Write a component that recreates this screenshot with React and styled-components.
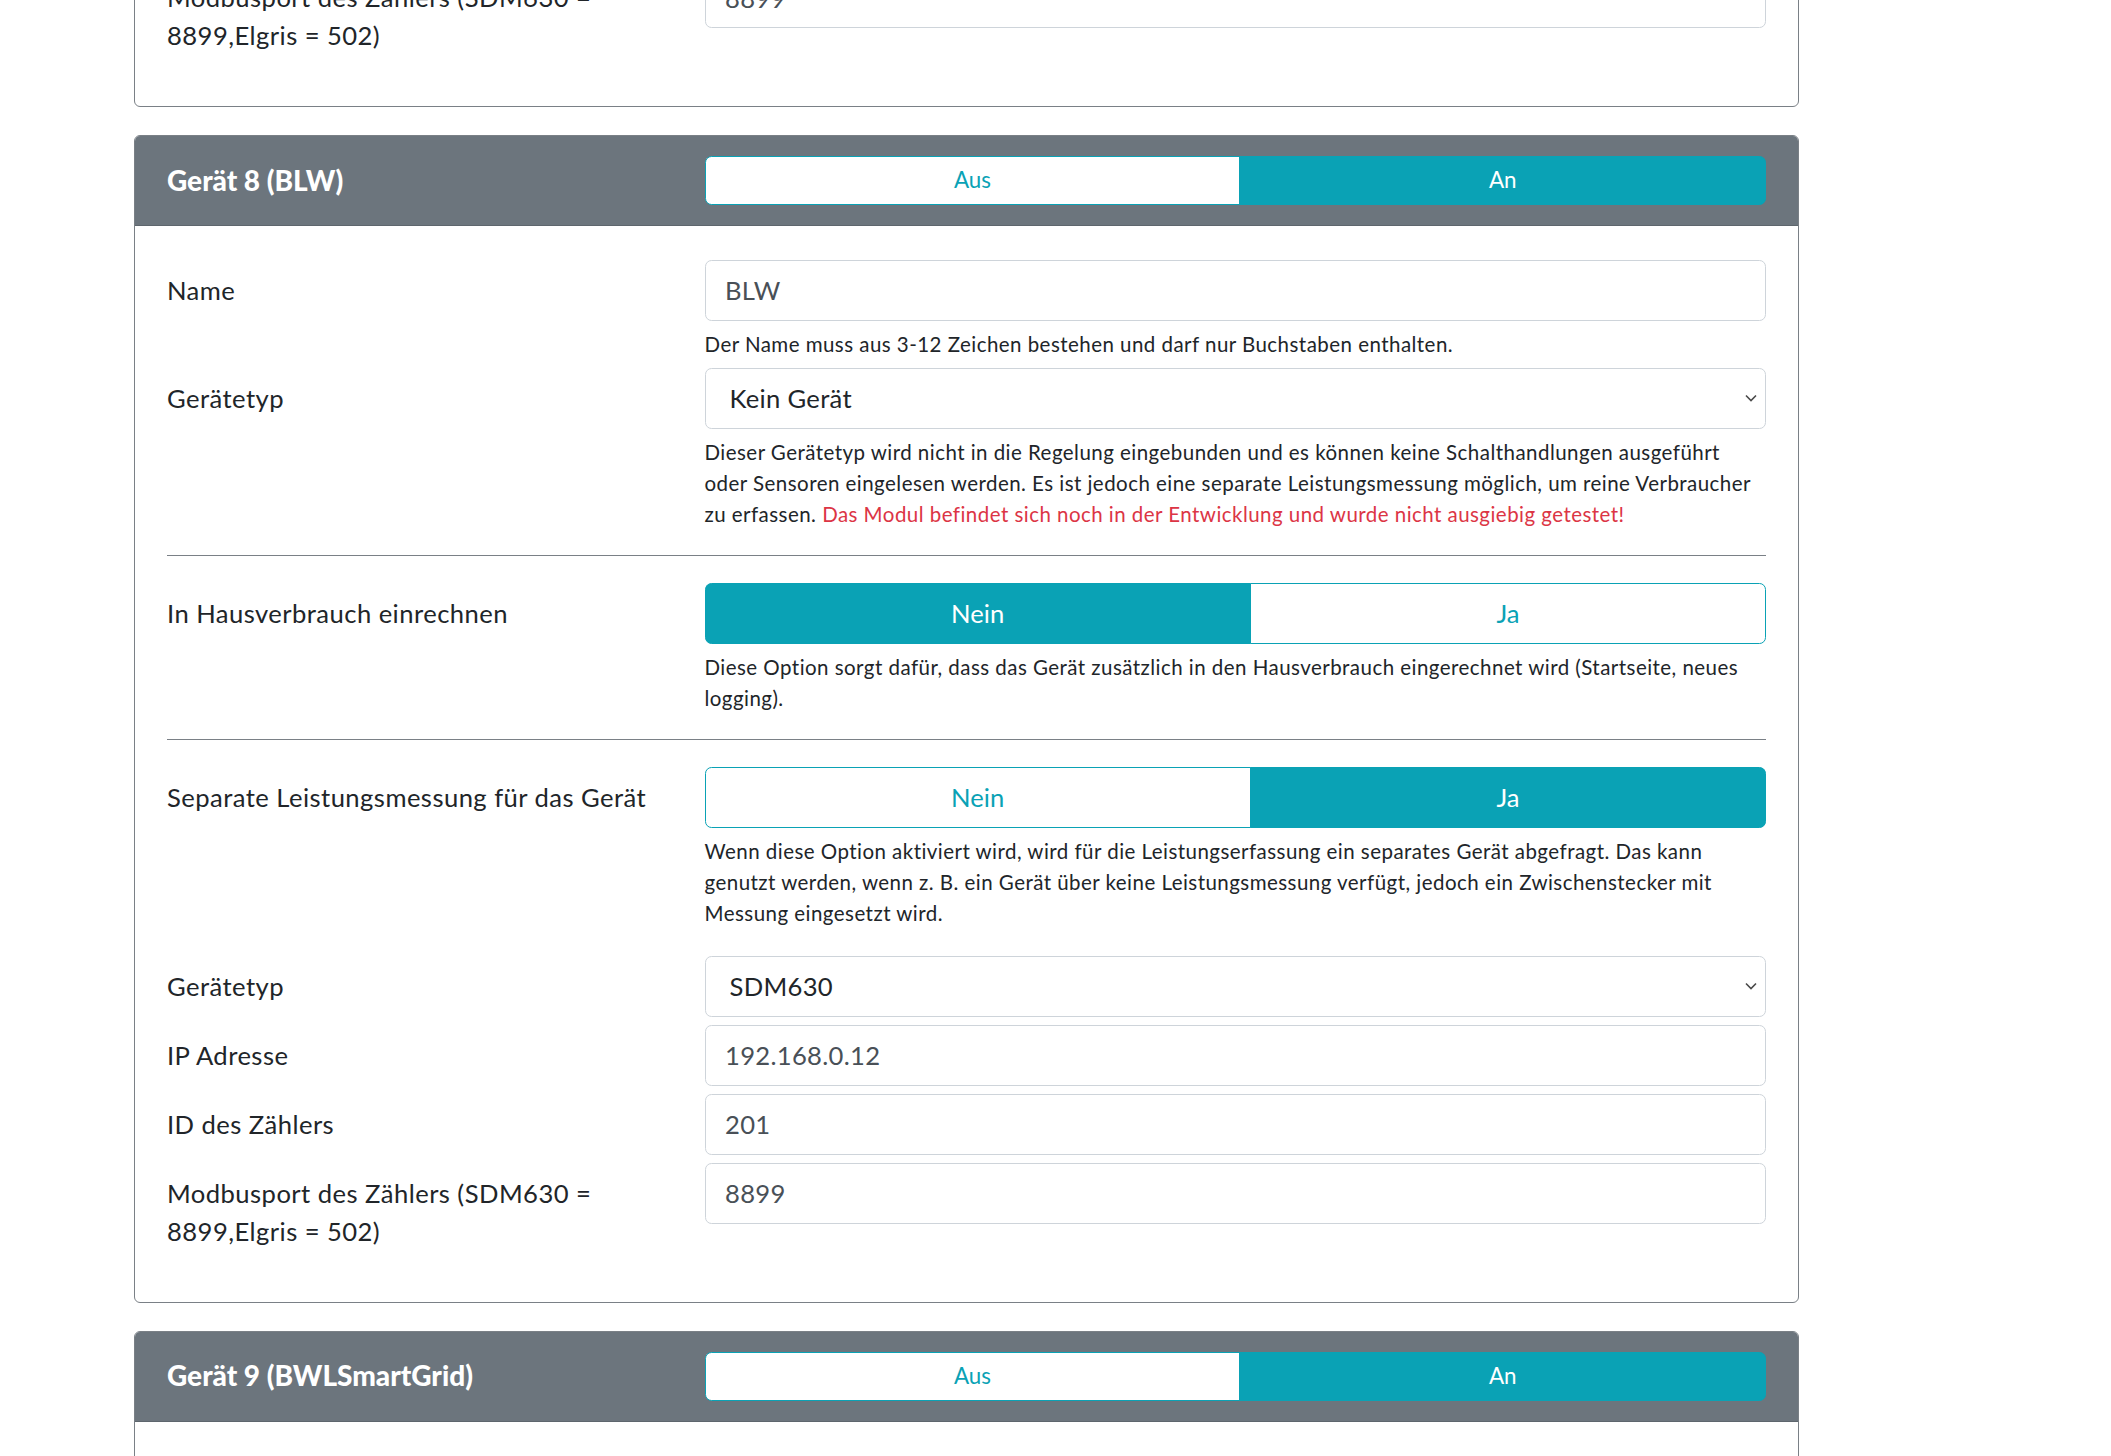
import React from 'react'
import styled, { createGlobalStyle } from 'styled-components';

const teal = '#0aa2b5';
const secondary = '#6c757d';
const line = '#7a8086';

const GlobalStyle = createGlobalStyle`
  html, body {
    margin: 0;
    padding: 0;
    background: #fff;
  }
  body {
    font-family: Lato, "Open Sans", "Noto Sans", sans-serif;
    font-size: 25.6px;
    line-height: 1.5;
    color: #212529;
  }
  * { box-sizing: border-box; }
`;

// the page is scrolled: only the tail of the previous card shows at the top
const Page = styled.div`
  width: 1665px;
  margin: -68px 0 0 134px;
`;

const Card = styled.section`
  border: 1px solid ${line};
  border-radius: 6px;
  margin-bottom: 28px;
  overflow: hidden;
  background: #fff;
`;

const CardHeader = styled.header`
  display: grid;
  grid-template-columns: 522px 1fr;
  column-gap: 15.5px;
  align-items: center;
  background: ${secondary};
  padding: 20px 32px;
  border-bottom: 1px solid rgba(0, 0, 0, 0.125);
`;

const Title = styled.h5`
  margin: 0;
  color: #fff;
  font-size: 28px;
  font-weight: 900;
  line-height: 1.2;
`;

const CardBody = styled.div`
  padding: 34px 32px 32px;
`;

const FormRow = styled.div`
  display: grid;
  grid-template-columns: 522px 1fr;
  column-gap: 15.5px;
  margin-top: ${p => p.$gapTop || 0}px;
  margin-bottom: 8px;
`;

const Label = styled.label`
  padding: 11px 0;
  line-height: 38.4px;
  font-size: 25.6px;
  letter-spacing: 0.45px;
`;

const Field = styled.div`
  min-width: 0;
`;

const Input = styled.input`
  display: block;
  width: 100%;
  height: 61px;
  padding: 0 19.5px;
  font-family: inherit;
  font-size: 25.6px;
  letter-spacing: 0.3px;
  color: #495057;
  background: #fff;
  border: 1px solid #ced4da;
  border-radius: 6.5px;
  outline: none;
`;

const SelectWrap = styled.div`
  position: relative;
`;

const Select = styled.select`
  display: block;
  width: 100%;
  height: 61px;
  padding: 0 40px 0 24px;
  font-family: inherit;
  font-size: 25.6px;
  letter-spacing: 0.3px;
  color: #212529;
  background: #fff;
  border: 1px solid #ced4da;
  border-radius: 6.5px;
  appearance: none;
  outline: none;
`;

const Chevron = styled.svg`
  position: absolute;
  right: 9px;
  top: 50%;
  margin-top: -4px;
  width: 12px;
  height: 8px;
  pointer-events: none;
`;

const Help = styled.small`
  display: block;
  margin-top: 8px;
  font-size: 20.5px;
  line-height: 31px;
  letter-spacing: 0.46px;
  color: #212529;
`;

const Danger = styled.span`
  color: #dc3545;
`;

const Divider = styled.hr`
  border: 0;
  border-top: 1px solid ${line};
  margin: 25px 0 27px;
`;

const Toggle = styled.div`
  display: flex;
  width: 100%;
  height: ${p => (p.$small ? 49 : 61)}px;
`;

const ToggleButton = styled.button`
  flex: 1 1 auto;
  margin: 0;
  padding: 0 12px;
  font-family: inherit;
  font-size: ${p => (p.$small ? 22.4 : 25.6)}px;
  line-height: 1;
  color: ${p => (p.$active ? '#fff' : teal)};
  background: ${p => (p.$active ? teal : '#fff')};
  border: 1px solid ${teal};
  cursor: pointer;
  & + & { margin-left: -1px; }
  &:first-child { border-radius: 6.5px 0 0 6.5px; }
  &:last-child { border-radius: 0 6.5px 6.5px 0; }
`;

const SwitchGroup = ({ options, value, small }) => (
  <Toggle $small={small}>
    {options.map(o => (
      <ToggleButton key={o} type="button" $small={small} $active={o === value}>{o}</ToggleButton>
    ))}
  </Toggle>
);

const TextRow = ({ label, value, help, gapTop }) => (
  <FormRow $gapTop={gapTop}>
    <Label>{label}</Label>
    <Field>
      <Input type="text" defaultValue={value} />
      {help && <Help>{help}</Help>}
    </Field>
  </FormRow>
);

const SelectRow = ({ label, value, children, gapTop }) => (
  <FormRow $gapTop={gapTop}>
    <Label>{label}</Label>
    <Field>
      <SelectWrap>
        <Select defaultValue={value}>
          <option>Kein Gerät</option>
          <option>SDM630</option>
          <option>Elgris</option>
        </Select>
        <Chevron viewBox="0 0 12 8">
          <path d="M1 1.5 L6 6.5 L11 1.5" fill="none" stroke="#4a4a4a" strokeWidth="1.6" />
        </Chevron>
      </SelectWrap>
      {children && <Help>{children}</Help>}
    </Field>
  </FormRow>
);

const SwitchRow = ({ label, value, children }) => (
  <FormRow>
    <Label>{label}</Label>
    <Field>
      <SwitchGroup options={['Nein', 'Ja']} value={value} />
      <Help>{children}</Help>
    </Field>
  </FormRow>
);

const MeterRows = ({ type, ip, id, port, gapTop }) => (
  <>
    <SelectRow label="Gerätetyp" value={type} gapTop={gapTop} />
    <TextRow label="IP Adresse" value={ip} />
    <TextRow label="ID des Zählers" value={id} />
    <TextRow label="Modbusport des Zählers (SDM630 = 8899,Elgris = 502)" value={port} />
  </>
);

export default function App() {
  return (
    <>
      <GlobalStyle />
      <Page>
        <Card>
          <CardBody>
            <TextRow label="Modbusport des Zählers (SDM630 = 8899,Elgris = 502)" value="8899" />
          </CardBody>
        </Card>

        <Card>
          <CardHeader>
            <Title>Gerät 8 (BLW)</Title>
            <SwitchGroup small options={['Aus', 'An']} value="An" />
          </CardHeader>
          <CardBody>
            <TextRow
              label="Name"
              value="BLW"
              help="Der Name muss aus 3-12 Zeichen bestehen und darf nur Buchstaben enthalten."
            />
            <SelectRow label="Gerätetyp" value="Kein Gerät">
              Dieser Gerätetyp wird nicht in die Regelung eingebunden und es können keine Schalthandlungen
              ausgeführt oder Sensoren eingelesen werden. Es ist jedoch eine separate Leistungsmessung möglich,
              um reine Verbraucher zu erfassen.{' '}
              <Danger>Das Modul befindet sich noch in der Entwicklung und wurde nicht ausgiebig getestet!</Danger>
            </SelectRow>
            <Divider />
            <SwitchRow label="In Hausverbrauch einrechnen" value="Nein">
              Diese Option sorgt dafür, dass das Gerät zusätzlich in den Hausverbrauch eingerechnet wird
              (Startseite, neues logging).
            </SwitchRow>
            <Divider />
            <SwitchRow label="Separate Leistungsmessung für das Gerät" value="Ja">
              Wenn diese Option aktiviert wird, wird für die Leistungserfassung ein separates Gerät abgefragt.
              Das kann genutzt werden, wenn z. B. ein Gerät über keine Leistungsmessung verfügt, jedoch ein
              Zwischenstecker mit Messung eingesetzt wird.
            </SwitchRow>
            <MeterRows type="SDM630" ip="192.168.0.12" id="201" port="8899" gapTop={27} />
          </CardBody>
        </Card>

        <Card>
          <CardHeader>
            <Title>Gerät 9 (BWLSmartGrid)</Title>
            <SwitchGroup small options={['Aus', 'An']} value="An" />
          </CardHeader>
          <CardBody>
            <TextRow
              label="Name"
              value="BWLSmartGrid"
              help="Der Name muss aus 3-12 Zeichen bestehen und darf nur Buchstaben enthalten."
            />
          </CardBody>
        </Card>
      </Page>
    </>
  );
}
